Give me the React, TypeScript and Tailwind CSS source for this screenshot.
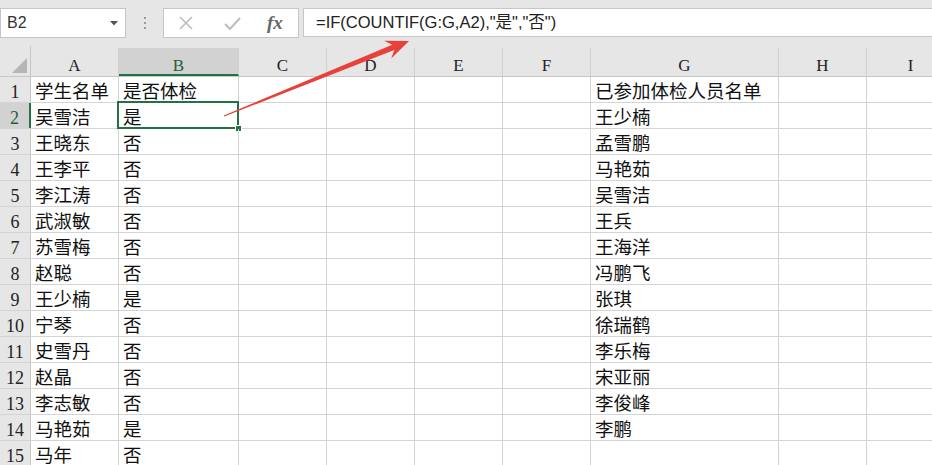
import React from 'react';

const serif = "font-['Liberation_Serif','Noto_Sans_CJK_SC',serif]";
const sans = "font-['Liberation_Sans','Noto_Sans_CJK_SC',sans-serif]";

const colWidths = ['w-[88px]', 'w-[120px]', 'w-[88px]', 'w-[88px]', 'w-[88px]', 'w-[88px]', 'w-[188px]', 'w-[88px]', 'w-[88px]'];
const colNames = ['A', 'B', 'C', 'D', 'E', 'F', 'G', 'H', 'I'];

const rows: [string, string, string][] = [
  ['学生名单', '是否体检', '已参加体检人员名单'],
  ['吴雪洁', '是', '王少楠'],
  ['王晓东', '否', '孟雪鹏'],
  ['王李平', '否', '马艳茹'],
  ['李江涛', '否', '吴雪洁'],
  ['武淑敏', '否', '王兵'],
  ['苏雪梅', '否', '王海洋'],
  ['赵聪', '否', '冯鹏飞'],
  ['王少楠', '是', '张琪'],
  ['宁琴', '否', '徐瑞鹤'],
  ['史雪丹', '否', '李乐梅'],
  ['赵晶', '否', '宋亚丽'],
  ['李志敏', '否', '李俊峰'],
  ['马艳茹', '是', '李鹏'],
  ['马年', '否', ''],
];

const Arrow = () => {
  const tail = [224, 116];
  const tip = [409, 41];
  const dx = tip[0] - tail[0];
  const dy = tip[1] - tail[1];
  const len = Math.hypot(dx, dy);
  const u = [dx / len, dy / len];
  const p = [-u[1], u[0]];
  const at = (d: number, w: number) => `${tip[0] - u[0] * d + p[0] * w},${tip[1] - u[1] * d + p[1] * w}`;
  const tailPt = (w: number) => `${tail[0] + p[0] * w},${tail[1] + p[1] * w}`;
  const pts = [tailPt(-0.6), at(17, -2.8), at(23, -9.5), at(0, 0), at(23, 9.5), at(17, 2.8), tailPt(0.6)].join(' ');
  return (
    <svg className="pointer-events-none absolute left-0 top-0" width="932" height="465">
      <polygon points={pts} fill="#e8413a" />
    </svg>
  );
};

const Cell = ({ w, children, className = '' }: { w: string; children?: React.ReactNode; className?: string }) => (
  <div className={`${w} h-full shrink-0 border-r border-[#d4d4d4] pl-[4px] leading-[31px] text-[18.5px] text-[#111] whitespace-nowrap ${className}`}>
    {children}
  </div>
);

export default function App() {
  return (
    <div className={`relative h-[465px] w-[932px] overflow-hidden bg-white ${serif}`}>
      {/* formula bar */}
      <div className="flex h-[46px] items-start bg-[#e6e6e6] pt-[8px]">
        <div className={`flex h-[30px] w-[126px] shrink-0 items-center justify-between border border-[#c6c6c6] bg-white pl-[6px] pr-[7px] ${sans} text-[16px] text-[#333]`}>
          <span>B2</span>
          <svg width="8" height="5" viewBox="0 0 8 5"><path d="M0 0h8L4 4.5z" fill="#555" /></svg>
        </div>
        <div className="flex h-[30px] w-[37px] shrink-0 flex-col items-center justify-center gap-[3px]">
          <span className="h-[2px] w-[2px] bg-[#999]" />
          <span className="h-[2px] w-[2px] bg-[#999]" />
          <span className="h-[2px] w-[2px] bg-[#999]" />
        </div>
        <div className="flex h-[30px] w-[136px] shrink-0 items-center border border-[#c6c6c6] bg-white">
          <svg className="ml-[15px]" width="14" height="14" viewBox="0 0 14 14">
            <path d="M1 1l12 12M13 1L1 13" stroke="#bdbdbd" strokeWidth="1.6" />
          </svg>
          <svg className="ml-[31px]" width="17" height="13" viewBox="0 0 17 13">
            <path d="M1 7l5 5L16 1" stroke="#bdbdbd" strokeWidth="2" fill="none" />
          </svg>
          <span className="ml-[26px] font-['Liberation_Serif',serif] text-[19px] font-bold italic text-[#666]">fx</span>
        </div>
        <div className={`ml-[4px] flex h-[29px] flex-1 items-center border border-r-0 border-[#c6c6c6] bg-white pl-[12px] ${sans} text-[16.5px] text-[#222]`}>
          =IF(COUNTIF(G:G,A2),"是","否")
        </div>
      </div>

      {/* column headers */}
      <div className="flex h-[31px] border-b border-[#c6c6c6] bg-[#e6e6e6]">
        <div className="relative w-[31px] shrink-0 border-r border-[#c6c6c6]">
          <svg className="absolute bottom-[3px] right-[3px]" width="15" height="15" viewBox="0 0 15 15">
            <path d="M15 0V15H0z" fill="#b5b5b5" />
          </svg>
        </div>
        {colNames.map((c, i) => (
          <div
            key={c}
            className={`${colWidths[i]} mt-[2px] shrink-0 border-r border-[#d0d0d0] text-center text-[17px] leading-[36px] ${
              c === 'B' ? 'border-b-2 border-b-[#217346] bg-[#d2d2d2] text-[#1f5f3a]' : 'text-[#222]'
            }`}
          >
            {c}
          </div>
        ))}
      </div>

      {/* rows */}
      {rows.map((r, idx) => {
        const n = idx + 1;
        const sel = n === 2;
        return (
          <div key={n} className="flex h-[26px] border-b border-[#d4d4d4]">
            <div
              className={`w-[31px] shrink-0 border-r text-center text-[18px] leading-[31px] ${
                sel ? 'border-r-2 border-r-[#217346] bg-[#d2d2d2] text-[#1f5f3a]' : 'border-[#c6c6c6] bg-[#e6e6e6] text-[#222]'
              }`}
            >
              {n}
            </div>
            <Cell w={colWidths[0]}>{r[0]}</Cell>
            <div className={`${colWidths[1]} relative h-full shrink-0 border-r border-[#d4d4d4] pl-[4px] text-[18.5px] leading-[31px] text-[#111]`}>
              {r[1]}
              {sel && (
                <>
                  <div className="absolute left-[-2px] top-[-2px] h-[28px] w-[122px] border-2 border-[#217346]" />
                  <div className="absolute left-[116px] top-[22px] h-[7px] w-[7px] border border-white bg-[#217346]" />
                </>
              )}
            </div>
            <Cell w={colWidths[2]} />
            <Cell w={colWidths[3]} />
            <Cell w={colWidths[4]} />
            <Cell w={colWidths[5]} />
            <Cell w={colWidths[6]}>{r[2]}</Cell>
            <Cell w={colWidths[7]} />
            <Cell w={colWidths[8]} />
          </div>
        );
      })}

      <Arrow />
    </div>
  );
}
